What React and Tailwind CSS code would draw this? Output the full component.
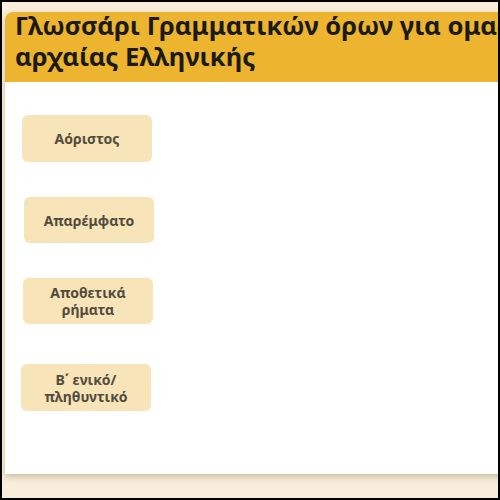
const terms = [
  { label: 'Αόριστος', cls: 'ml-[17px] h-[47px]' },
  { label: 'Απαρέμφατο', cls: 'ml-[19px] h-[46px] mt-[35px]' },
  { label: 'Αποθετικά ρήματα', cls: 'ml-[18px] h-[46px] mt-[35px]' },
  { label: 'Β΄ ενικό/ πληθυντικό', cls: 'ml-[16px] h-[47px] mt-[40px]' },
];

export default function App() {
  return (
    <div className="w-[500px] h-[500px] overflow-hidden border-2 border-black bg-[#f9eedb] pt-[10px] pl-[3px] font-['Noto_Sans',sans-serif]">
      <div className="w-[520px] h-[462px] rounded-tl-lg bg-white shadow-[0_3px_6px_rgba(120,100,60,0.35)] overflow-hidden">
        <div className="flow-root h-[70px] bg-[#edb52f] pl-[10px]">
          <h1 className="-mt-[2px] text-[25.6px] leading-[31px] font-bold text-[#1b1a17] whitespace-nowrap">
            Γλωσσάρι Γραμματικών όρων για ομαδικά
            <br />
            αρχαίας Ελληνικής
          </h1>
        </div>
        <div className="flex flex-col items-start pt-[33px]">
          {terms.map((t) => (
            <button
              key={t.label}
              className={`${t.cls} w-[130px] rounded-md bg-[#f8e4b9] flex items-center justify-center px-5 text-center text-[14px] leading-[17px] font-bold text-[#524c3c]`}
            >
              {t.label}
            </button>
          ))}
        </div>
      </div>
    </div>
  );
}
